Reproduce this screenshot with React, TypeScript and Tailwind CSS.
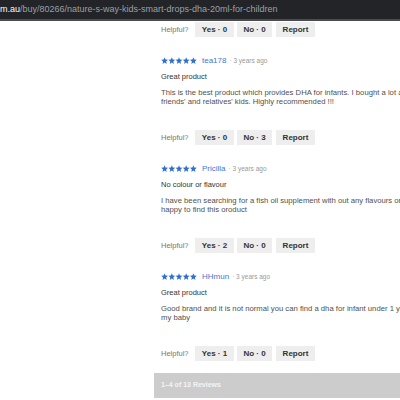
import React from "react";

function Stars() {
  const star = (ox: number) =>
    `${ox + 5},0.4 ${ox + 6.3},3.6 ${ox + 9.7},3.8 ${ox + 7.1},6.1 ${ox + 7.9},9.6 ${ox + 5},7.7 ${ox + 2.1},9.6 ${ox + 2.9},6.1 ${ox + 0.3},3.8 ${ox + 3.7},3.6`;
  return (
    <svg width="36" height="7.2" viewBox="0 0 50 10" className="shrink-0">
      {[0, 10, 20, 30, 40].map((o) => (
        <polygon key={o} points={star(o)} fill="#2f6fd0" />
      ))}
    </svg>
  );
}

function Helpful({ yes, no }: { yes: number; no: number }) {
  return (
    <div className="flex items-center h-[15px] pl-[7px]">
      <span className="w-[34px] text-[7.5px] text-[#777]">Helpful?</span>
      <span className="w-[39px] h-[15px] flex items-center justify-center bg-[#eeeeee] text-[8px] font-bold text-[#333]">
        Yes · {yes}
      </span>
      <span className="ml-[3px] w-[35px] h-[15px] flex items-center justify-center bg-[#eeeeee] text-[8px] font-bold text-[#333]">
        No · {no}
      </span>
      <span className="ml-[4px] w-[39px] h-[15px] flex items-center justify-center bg-[#eeeeee] text-[8px] font-bold text-[#333]">
        Report
      </span>
    </div>
  );
}

function Review({
  name,
  title,
  line1,
  line2,
}: {
  name: string;
  title: string;
  line1: string;
  line2: string;
}) {
  return (
    <div className="pl-[7px]">
      <div className="mt-[19px] h-[10px] flex items-center whitespace-nowrap">
        <Stars />
        <span className="ml-[5px] text-[8px] text-[#3c78d8]">{name}</span>
        <span className="ml-[3px] text-[6.5px] text-[#999]">· 3 years ago</span>
      </div>
      <div className="mt-[6px] h-[9px] leading-[9px] text-[7.5px] text-[#333] whitespace-nowrap">
        {title}
      </div>
      <div className="mt-[7px] leading-[9px] text-[7.7px] text-[#505050] whitespace-nowrap">
        <div>{line1}</div>
        <div>{line2}</div>
      </div>
    </div>
  );
}

export default function App() {
  return (
    <div className="w-[400px] h-[400px] overflow-hidden bg-white flex flex-col font-['Liberation_Sans',Arial,sans-serif]">
      <div className="h-[19px] shrink-0 bg-[#232427] flex items-center text-[9px] whitespace-nowrap">
        <span className="text-white">m.au</span>
        <span className="text-[#9aa0a6]">/buy/80266/nature-s-way-kids-smart-drops-dha-20ml-for-children</span>
      </div>
      <div className="h-[2px] shrink-0 bg-[#4a4c50]" />
      <div className="pl-[154px] w-[700px]">
        <div className="mt-[1px]">
          <Helpful yes={0} no={0} />
        </div>
        <Review
          name="tea178"
          title="Great product"
          line1="This is the best product which provides DHA for infants. I bought a lot as gifts for my"
          line2="friends' and relatives' kids. Highly recommended !!!"
        />
        <div className="mt-[24px]">
          <Helpful yes={0} no={3} />
        </div>
        <Review
          name="Pricilla"
          title="No colour or flavour"
          line1="I have been searching for a fish oil supplement with out any flavours or colours. So"
          line2="happy to find this oroduct"
        />
        <div className="mt-[24px]">
          <Helpful yes={2} no={0} />
        </div>
        <Review
          name="HHmun"
          title="Great product"
          line1="Good brand and it is not normal you can find a dha for infant under 1 year old. Recommend for"
          line2="my baby"
        />
        <div className="mt-[24px]">
          <Helpful yes={1} no={0} />
        </div>
        <div className="mt-[12px] h-[25px] bg-[#cccccc] flex items-center pl-[7px] text-[7px] font-bold text-[#f4f4f4]">
          1–4 of 13 Reviews
        </div>
      </div>
    </div>
  );
}
